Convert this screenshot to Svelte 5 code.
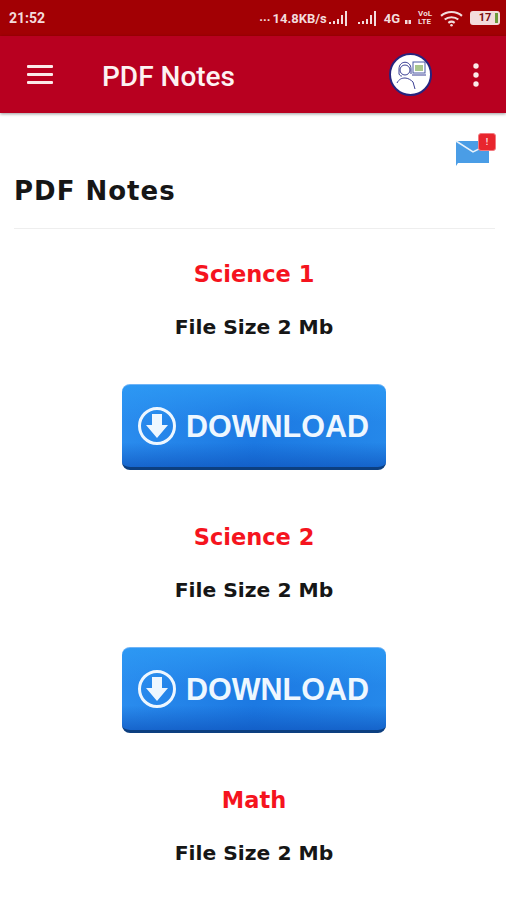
<script lang="ts">
  const notes = [
    { title: 'Science 1', size: 'File Size 2 Mb', button: true },
    { title: 'Science 2', size: 'File Size 2 Mb', button: true },
    // the third button sits below the fold
    { title: 'Math', size: 'File Size 2 Mb', button: false },
  ];
</script>

<div class="page">
  <div class="status">
    <span class="time">21:52</span>
    <div class="status-right">
      <span class="dots">...</span>
      <span class="speed">14.8KB/s</span>
      <svg class="bars" width="21" height="15" viewBox="0 0 21 15" fill="#f3dcdc">
        <rect x="1" y="11" width="2" height="2" /><rect x="5" y="10" width="2" height="3" /><rect x="9" y="8" width="2" height="5" /><rect x="13" y="4" width="2" height="9" /><rect x="17" y="0" width="2" height="15" />
      </svg>
      <svg class="bars" width="21" height="15" viewBox="0 0 21 15" fill="#f3dcdc">
        <rect x="1" y="11" width="2" height="2" /><rect x="5" y="10" width="2" height="3" /><rect x="9" y="8" width="2" height="5" /><rect x="13" y="4" width="2" height="9" /><rect x="17" y="0" width="2" height="15" />
      </svg>
      <span class="speed">4G</span>
      <svg class="tiny" width="6" height="5" viewBox="0 0 6 5" fill="#f3dcdc"><rect width="2.500" height="4" y="1" /><rect x="3.500" width="2.500" height="4" y="1" /></svg>
      <span class="volte">VoL<br />LTE</span>
      <svg class="wifi" width="23" height="17" viewBox="0 0 22 16" fill="none" stroke="#f3dcdc" stroke-width="2">
        <path d="M1 5.500C6.500 .5 15.500 .5 21 5.500" />
        <path d="M4.500 9C8 6 14 6 17.500 9" />
        <path d="M8 12.200C9.800 10.800 12.200 10.800 14 12.200" />
        <circle cx="11" cy="14.500" r="1.200" fill="#f3dcdc" stroke="none" />
      </svg>
      <div class="battery"><span class="level">17</span><span class="charge"></span></div>
    </div>
  </div>

  <header class="appbar">
    <svg class="menu" width="26" height="20" viewBox="0 0 26 20" fill="#fbeaea">
      <rect y="0" width="26" height="3" rx="1" /><rect y="8" width="26" height="3" rx="1" /><rect y="16" width="26" height="3" rx="1" />
    </svg>
    <span class="title">PDF Notes</span>
    <div class="avatar">
      <svg width="38" height="38" viewBox="0 0 38 38" fill="none" stroke="#3b3f95" stroke-width="1">
        <circle cx="13" cy="14" r="5" />
        <path d="M7 13c0-9 12-9 12 0v5M7 13v5c1 2 2 2 3 2" />
        <path d="M5 27c2-4 5-5 8-5s6 2 8 4l2 7" />
        <rect x="21" y="6" width="12" height="11" stroke="#4a5aa5" />
        <rect x="23" y="9" width="8" height="6" fill="#a9c78c" stroke="none" />
        <path d="M20 19h14" />
      </svg>
    </div>
    <svg class="more" width="6" height="24" viewBox="0 0 6 24" fill="#fbeaea">
      <circle cx="3" cy="3" r="2.700" /><circle cx="3" cy="12" r="2.700" /><circle cx="3" cy="21" r="2.700" />
    </svg>
  </header>

  <main class="content">
    <div class="mail-row">
      <div class="mail">
        <svg width="36" height="28" viewBox="0 0 36 28">
          <path d="M1 3h33v22H3l-2 3z" fill="#4a9de6" />
          <path d="M1 3l17 11 16-8" fill="none" stroke="#e8f2fb" stroke-width="1.500" />
        </svg>
        <span class="badge">!</span>
      </div>
    </div>
    <h1>PDF Notes</h1>
    <hr />
    {#each notes as note}
      <section class="note">
        <h2>{note.title}</h2>
        <p>{note.size}</p>
        {#if note.button}
          <button type="button" class="download">
            <svg width="40" height="40" viewBox="0 0 40 40">
              <circle cx="20" cy="20" r="17.500" fill="none" stroke="#eef7ff" stroke-width="3" />
              <path d="M15 8h10v11h6L20 32 9 19h6z" fill="#eef7ff" />
            </svg>
            <span>DOWNLOAD</span>
          </button>
        {/if}
      </section>
    {/each}
  </main>
</div>

<style>
  :global(body) {
    margin: 0;
    background: #fff;
  }
  .page {
    width: 506px;
    height: 900px;
    overflow: hidden;
    background: #fff;
    font-family: "DejaVu Sans", sans-serif;
  }
  .status {
    height: 36px;
    background: #a20004;
    display: flex;
    align-items: center;
    justify-content: space-between;
    padding: 0 6px 0 9px;
    color: #f3dcdc;
    box-sizing: border-box;
  }
  .time {
    font: 700 14px Roboto, sans-serif;
  }
  .status-right {
    display: flex;
    align-items: center;
    gap: 2px;
  }
  .dots {
    font: 700 13px Roboto, sans-serif;
    margin-top: -4px;
  }
  .speed {
    font: 700 13px Roboto, sans-serif;
  }
  .bars {
    margin-left: -1px;
    margin-right: 7px;
  }
  .bars + .speed {
    margin-left: -3px;
  }
  .tiny {
    margin-top: 6px;
    margin-left: 3px;
    margin-right: 5px;
  }
  .volte {
    font: 700 8px/8px Roboto, sans-serif;
    margin-right: 6px;
  }
  .wifi {
    margin-right: 5px;
  }
  .battery {
    position: relative;
    display: flex;
    justify-content: center;
    align-items: center;
    width: 30px;
    height: 14px;
    box-sizing: border-box;
    border: 2px solid #f3dcdc;
    border-radius: 3px;
    background: #f3dcdc;
  }
  .level {
    font: 700 11px/10px Roboto, sans-serif;
    color: #7a1010;
  }
  .charge {
    position: absolute;
    right: 0;
    top: 0;
    bottom: 0;
    width: 3px;
    background: #6d9a3c;
  }
  .appbar {
    height: 77px;
    background: #b80020;
    display: flex;
    align-items: center;
    padding-left: 27px;
    box-sizing: border-box;
    box-shadow: 0 1px 3px rgba(0, 0, 0, 0.4);
    position: relative;
  }
  .title {
    margin-left: 49px;
    color: #fdf2f2;
    font: 500 28px Roboto, sans-serif;
    flex: 1;
    padding-top: 4px;
  }
  .avatar {
    width: 43px;
    height: 43px;
    box-sizing: border-box;
    border: 2px solid #27247e;
    border-radius: 50%;
    background: #fff;
    display: flex;
    align-items: center;
    justify-content: center;
    margin-right: 41px;
  }
  .more {
    margin-right: 27px;
  }
  .content {
    padding: 0 11px 0 14px;
  }
  .mail-row {
    display: flex;
    justify-content: flex-end;
    padding-top: 25px;
    height: 35px;
  }
  .mail {
    position: relative;
    width: 36px;
    height: 28px;
    margin-right: 4px;
  }
  .mail svg {
    display: block;
  }
  .badge {
    position: absolute;
    top: -5px;
    right: -5px;
    width: 16px;
    height: 16px;
    border: 1px solid #f27a80;
    border-radius: 3px;
    background: #e8252d;
    color: #fbdcdc;
    font: 700 9px/16px Roboto, sans-serif;
    text-align: center;
  }
  h1 {
    margin: 0;
    font-size: 26px;
    line-height: 37px;
    font-weight: 700;
    letter-spacing: 1px;
    color: #161616;
  }
  hr {
    margin: 18px 0 0;
    border: 0;
    border-top: 1px solid #eeeeee;
  }
  .note {
    display: flex;
    flex-direction: column;
    align-items: center;
    height: 263px;
    padding-right: 1px;
    box-sizing: border-box;
  }
  h2 {
    margin: 29px 0 0;
    font-size: 22.500px;
    line-height: 33px;
    font-weight: 700;
    color: #f5141e;
  }
  p {
    margin: 21px 0 0;
    font-size: 20.300px;
    line-height: 30px;
    font-weight: 700;
    color: #161616;
  }
  .download {
    margin-top: 42px;
    width: 264px;
    height: 86px;
    padding: 0 0 0 15px;
    border: 0;
    border-top: 1px solid #6fb4f7;
    border-bottom: 3px solid #0c3f80;
    border-radius: 8px;
    background:
      linear-gradient(180deg, rgba(45, 155, 245, 0.8) 0%, rgba(45, 155, 245, 0) 45%, rgba(15, 85, 190, 0) 70%, rgba(15, 85, 190, 0.7) 100%),
      linear-gradient(90deg, #2a8cee 0%, #1c79e2 50%, #2588ea 100%);
    display: flex;
    align-items: center;
    gap: 9px;
    color: #eef7ff;
    box-sizing: border-box;
  }
  .download span {
    font: 700 30.500px "Liberation Sans", sans-serif;
  }
</style>
